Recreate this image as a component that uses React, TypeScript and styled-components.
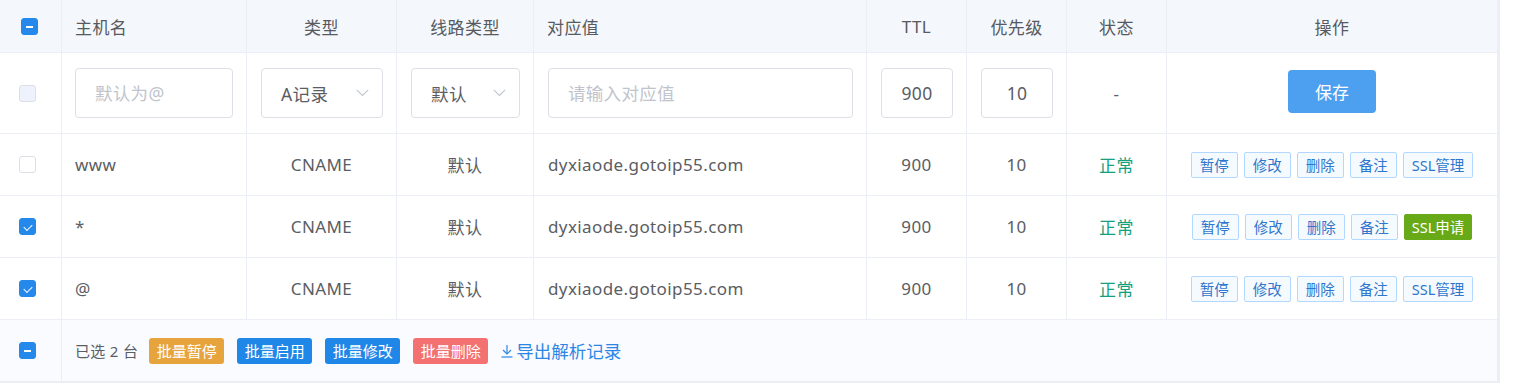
import React from 'react';
import styled, { createGlobalStyle, css } from 'styled-components';

const GlobalStyle = createGlobalStyle`
  * { box-sizing: border-box; }
  body {
    margin: 0;
    background: #fff;
    font-family: "Noto Sans", "Noto Sans CJK SC", sans-serif;
    color: #5a5d63;
  }
`;

const COLUMNS = '62px 185px 150px 137px 333px 100px 100px 100px 333px';

const Table = styled.div`
  width: 1500px;
`;

const Row = styled.div<{ $h: number; $bg?: string; $cols?: string; $thick?: boolean }>`
  display: grid;
  grid-template-columns: ${({ $cols }) => $cols || COLUMNS};
  height: ${({ $h }) => $h}px;
  background: ${({ $bg }) => $bg || '#fff'};
  border-bottom: ${({ $thick }) => ($thick ? 2 : 1)}px solid #ebeef5;
`;

const Cell = styled.div<{ $align?: 'left' | 'center'; $pl?: number; $last?: boolean }>`
  display: flex;
  align-items: center;
  justify-content: ${({ $align }) => ($align === 'center' ? 'center' : 'flex-start')};
  padding: 0 13px 0 ${({ $pl }) => ($pl ?? 13)}px;
  border-right: ${({ $last }) => ($last ? 3 : 1)}px solid #ebeef5;
  font-size: 17px;
  letter-spacing: 0.4px;
  color: #5a5d63;
  white-space: nowrap;
  min-width: 0;
`;

const HeadCell = styled(Cell)`
  color: #575a60;
`;

type CheckState = 'unchecked' | 'checked' | 'indeterminate' | 'disabled';

const Check = styled.span<{ $state: CheckState }>`
  position: relative;
  display: inline-block;
  width: 17px;
  height: 17px;
  border-radius: 3px;
  border: 1px solid #dcdfe6;
  background: #fff;
  ${({ $state }) =>
    $state === 'disabled' &&
    css`
      background: #edf2fc;
      border-color: #dcdfe6;
    `}
  ${({ $state }) =>
    ($state === 'checked' || $state === 'indeterminate') &&
    css`
      background: #2589ec;
      border-color: #2589ec;
    `}
  ${({ $state }) =>
    $state === 'checked' &&
    css`
      &::after {
        content: '';
        position: absolute;
        left: 4px;
        top: 5px;
        width: 7px;
        height: 4px;
        border-left: 1.5px solid #fff;
        border-bottom: 1.5px solid #fff;
        transform: rotate(-45deg);
        transform-origin: center;
      }
    `}
  ${({ $state }) =>
    $state === 'indeterminate' &&
    css`
      &::after {
        content: '';
        position: absolute;
        left: 4px;
        right: 4px;
        top: 7px;
        height: 2px;
        background: #fff;
      }
    `}
`;

const TextInput = styled.input<{ $center?: boolean }>`
  width: 100%;
  height: 50px;
  border: 1px solid #dcdfe6;
  border-radius: 4px;
  padding: 0 ${({ $center }) => ($center ? 4 : 19)}px;
  font-family: inherit;
  font-size: 17.5px;
  letter-spacing: 0.3px;
  color: #5a5d63;
  text-align: ${({ $center }) => ($center ? 'center' : 'left')};
  outline: none;
  &::placeholder {
    color: #c0c4cc;
  }
`;

const SelectBox = styled.div`
  width: 100%;
  height: 50px;
  border: 1px solid #dcdfe6;
  border-radius: 4px;
  padding: 0 13px 0 19px;
  display: flex;
  align-items: center;
  justify-content: space-between;
  font-size: 17.5px;
  color: #5a5d63;
`;

const Chevron = () => (
  <svg width="13" height="8" viewBox="0 0 13 8" fill="none">
    <polyline points="0.8,0.8 6.5,6.5 12.2,0.8" stroke="#c0c4cc" strokeWidth="1.1" />
  </svg>
);

const SaveButton = styled.button`
  width: 88px;
  height: 43px;
  margin-bottom: 3px;
  border: none;
  border-radius: 4px;
  background: #4d9ff0;
  color: #fff;
  font-family: inherit;
  font-size: 17px;
  cursor: pointer;
`;

const Status = styled.span`
  color: #12a07e;
`;

const Ops = styled.div`
  display: flex;
  gap: 6px;
  justify-content: center;
  width: 100%;
  letter-spacing: 0;
`;

const OpButton = styled.button<{ $success?: boolean }>`
  height: 26px;
  padding: 0 8px;
  border-radius: 2px;
  font-family: inherit;
  font-size: 14.5px;
  line-height: 24px;
  border: 1px solid #b3d8ff;
  background: #f5faff;
  color: #2f76cc;
  cursor: pointer;
  ${({ $success }) =>
    $success &&
    css`
      background: #67a916;
      border-color: #67a916;
      color: #fff;
      padding: 0 7px;
    `}
`;

const Footer = styled.div`
  display: flex;
  align-items: center;
  gap: 13px;
  padding-left: 13px;
  border-right: 3px solid #ebeef5;
  font-size: 15px;
  color: #5a5d63;
`;

const Selected = styled.span`
  margin-right: -2px;
  letter-spacing: 0.3px;
`;

const BatchButton = styled.button<{ $color: string }>`
  width: 75px;
  height: 26px;
  border: none;
  border-radius: 3px;
  background: ${({ $color }) => $color};
  color: #fff;
  font-family: inherit;
  font-size: 15px;
  padding: 0;
  cursor: pointer;
`;

const ExportLink = styled.a`
  display: inline-flex;
  align-items: center;
  gap: 3px;
  font-size: 17.5px;
  color: #2d86e6;
  text-decoration: none;
  cursor: pointer;
`;

const DownloadIcon = () => (
  <svg width="12" height="14" viewBox="0 0 12 14" fill="none" stroke="#2d86e6" strokeWidth="1.2">
    <line x1="6" y1="1" x2="6" y2="10" />
    <polyline points="2,6 6,10 10,6" />
    <line x1="0.5" y1="13" x2="11.5" y2="13" />
  </svg>
);

type Record = {
  host: string;
  type: string;
  line: string;
  value: string;
  ttl: number;
  priority: number;
  checked: boolean;
  sslApplied: boolean;
};

const records: Record[] = [
  { host: 'www', type: 'CNAME', line: '默认', value: 'dyxiaode.gotoip55.com', ttl: 900, priority: 10, checked: false, sslApplied: true },
  { host: '*', type: 'CNAME', line: '默认', value: 'dyxiaode.gotoip55.com', ttl: 900, priority: 10, checked: true, sslApplied: false },
  { host: '@', type: 'CNAME', line: '默认', value: 'dyxiaode.gotoip55.com', ttl: 900, priority: 10, checked: true, sslApplied: true },
];

export default function App() {
  return (
    <>
      <GlobalStyle />
      <Table>
        <Row $h={53} $bg="#f4f7fb">
          <HeadCell $pl={21}>
            <Check $state="indeterminate" />
          </HeadCell>
          <HeadCell>主机名</HeadCell>
          <HeadCell $align="center">类型</HeadCell>
          <HeadCell $align="center">线路类型</HeadCell>
          <HeadCell>对应值</HeadCell>
          <HeadCell $align="center">TTL</HeadCell>
          <HeadCell $align="center">优先级</HeadCell>
          <HeadCell $align="center">状态</HeadCell>
          <HeadCell $align="center" $last>操作</HeadCell>
        </Row>

        <Row $h={81}>
          <Cell $pl={19}>
            <Check $state="disabled" />
          </Cell>
          <Cell>
            <TextInput placeholder="默认为@" />
          </Cell>
          <Cell $pl={14}>
            <SelectBox>
              <span>A记录</span>
              <Chevron />
            </SelectBox>
          </Cell>
          <Cell $pl={14}>
            <SelectBox>
              <span>默认</span>
              <Chevron />
            </SelectBox>
          </Cell>
          <Cell $pl={14}>
            <TextInput placeholder="请输入对应值" />
          </Cell>
          <Cell $pl={14}>
            <TextInput $center defaultValue="900" />
          </Cell>
          <Cell $pl={14}>
            <TextInput $center defaultValue="10" />
          </Cell>
          <Cell $align="center">-</Cell>
          <Cell $align="center" $last>
            <SaveButton>保存</SaveButton>
          </Cell>
        </Row>

        {records.map((r) => (
          <Row $h={62} key={r.host}>
            <Cell $pl={19}>
              <Check $state={r.checked ? 'checked' : 'unchecked'} />
            </Cell>
            <Cell>{r.host}</Cell>
            <Cell $align="center">{r.type}</Cell>
            <Cell $align="center">{r.line}</Cell>
            <Cell $pl={14}>{r.value}</Cell>
            <Cell $align="center">{r.ttl}</Cell>
            <Cell $align="center">{r.priority}</Cell>
            <Cell $align="center">
              <Status>正常</Status>
            </Cell>
            <Cell $align="center" $last>
              <Ops>
                <OpButton>暂停</OpButton>
                <OpButton>修改</OpButton>
                <OpButton>删除</OpButton>
                <OpButton>备注</OpButton>
                {r.sslApplied ? <OpButton>SSL管理</OpButton> : <OpButton $success>SSL申请</OpButton>}
              </Ops>
            </Cell>
          </Row>
        ))}

        <Row $h={63} $bg="#f9fbfe" $cols="62px 1438px" $thick>
          <Cell $pl={19}>
            <Check $state="indeterminate" />
          </Cell>
          <Footer>
            <Selected>已选 2 台</Selected>
            <BatchButton $color="#e8a43c">批量暂停</BatchButton>
            <BatchButton $color="#1f87e8">批量启用</BatchButton>
            <BatchButton $color="#1f87e8">批量修改</BatchButton>
            <BatchButton $color="#f47171">批量删除</BatchButton>
            <ExportLink>
              <DownloadIcon />
              导出解析记录
            </ExportLink>
          </Footer>
        </Row>
      </Table>
    </>
  );
}
